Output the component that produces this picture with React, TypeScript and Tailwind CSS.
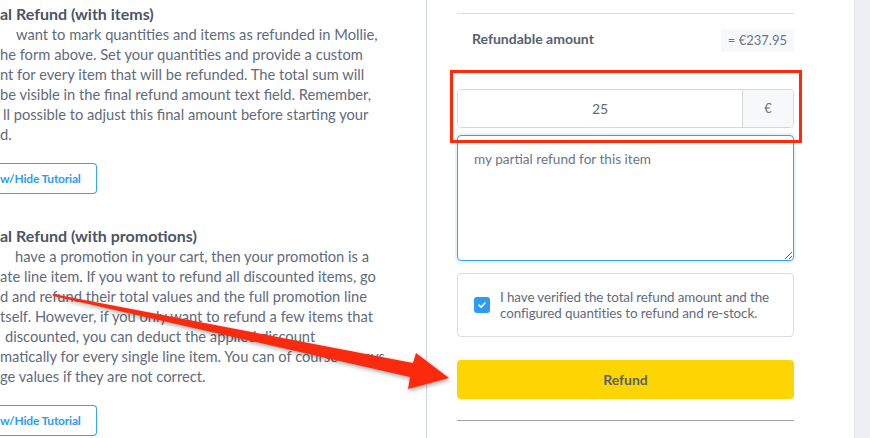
import React from 'react';

const font = { fontFamily: 'Lato, "Noto Sans", sans-serif' };

const itemsLines = [
  { text: 'want to mark quantities and items as refunded in Mollie,', pad: 'pl-[16px]' },
  { text: 'he form above. Set your quantities and provide a custom', pad: 'pl-0' },
  { text: 'nt for every item that will be refunded. The total sum will', pad: 'pl-0' },
  { text: 'be visible in the final refund amount text field. Remember,', pad: 'pl-0' },
  { text: 'll possible to adjust this final amount before starting your', pad: 'pl-[3px]' },
  { text: 'd.', pad: 'pl-0' },
];

const promoLines = [
  { text: 'have a promotion in your cart, then your promotion is a', pad: 'pl-[15px]' },
  { text: 'ate line item. If you want to refund all discounted items, go', pad: 'pl-0' },
  { text: 'd and refund their total values and the full promotion line', pad: 'pl-0' },
  { text: 'tself. However, if you only want to refund a few items that', pad: 'pl-0' },
  { text: 'discounted, you can deduct the applied discount', pad: 'pl-[5px]' },
  { text: 'matically for every single line item. You can of course always', pad: 'pl-0' },
  { text: 'ge values if they are not correct.', pad: 'pl-0' },
];

function TutorialSection({ title, lines }: { title: string; lines: { text: string; pad: string }[] }) {
  return (
    <div>
      <h3 className="text-[16px] leading-[20px] font-bold text-[#4b5563] whitespace-nowrap">{title}</h3>
      <div className="text-[14.7px] leading-[20px] text-[#5f6b7b]">
        {lines.map((line, i) => (
          <div key={i} className={`whitespace-nowrap ${line.pad}`}>
            {line.text}
          </div>
        ))}
      </div>
      <button className="mt-[19px] h-[31px] pr-[15px] border border-[#3aa0f0] rounded-r-[4px] border-l-0 text-[12px] tracking-[-0.2px] font-bold text-[#2d9cf0]">
        w/Hide Tutorial
      </button>
    </div>
  );
}

export default function App() {
  return (
    <div className="relative w-[870px] h-[438px] overflow-hidden bg-white flex" style={font}>
      {/* left column with tutorials */}
      <div className="w-[427px] shrink-0 border-r border-[#cfd6df] overflow-hidden pt-[4px]">
        <TutorialSection title="al Refund (with items)" lines={itemsLines} />
        <div className="mt-[32px]">
          <TutorialSection title="al Refund (with promotions)" lines={promoLines} />
        </div>
      </div>

      {/* refund form */}
      <div className="w-[427px] shrink-0 pl-[30px] pr-[60px]">
        <div className="mt-[13px] border-t border-[#dcdcdc]" />
        <div className="mt-[15px] flex items-start justify-between">
          <span className="pl-[15px] text-[14px] leading-[20px] font-bold text-[#556070]">Refundable amount</span>
          <span className="h-[23px] px-[7px] flex items-center bg-[#f7f8fa] rounded-[2px] text-[13px] text-[#6b7585]">
            = €237.95
          </span>
        </div>

        <div className="mt-[37px] h-[39px] flex border border-[#d6d9de] rounded-[4px] overflow-hidden">
          <input
            readOnly
            value="25"
            className="flex-1 min-w-0 text-center text-[14px] text-[#5f6b7b] outline-none bg-white"
            style={font}
          />
          <div className="w-[51px] flex items-center justify-center border-l border-[#d6d9de] bg-[#f7f8fa] text-[13px] text-[#6b7585]">
            €
          </div>
        </div>

        <textarea
          readOnly
          defaultValue="my partial refund for this item"
          className="mt-[7px] block w-full h-[126px] px-[16px] pt-[13px] border border-[#3d9df2] rounded-[4px] shadow-[0_0_0_2px_rgba(61,157,242,0.12)] text-[13.6px] leading-[20px] text-[#6b7585] outline-none"
          style={font}
        />

        <div className="mt-[12px] h-[64px] flex items-center gap-[10px] px-[16px] border border-[#d8dde3] rounded-[4px]">
          <div className="w-[16px] h-[16px] shrink-0 rounded-[3px] bg-[#2e9bf0] flex items-center justify-center">
            <svg width="10" height="10" viewBox="0 0 10 10">
              <path d="M2 5.2 L4.1 7.2 L8 3" fill="none" stroke="white" strokeWidth="1.6" strokeLinecap="round" strokeLinejoin="round" />
            </svg>
          </div>
          <p className="text-[13.4px] tracking-[-0.1px] leading-[16px] text-[#5f6b7b]">
            I have verified the total refund amount and the configured quantities to refund and re-stock.
          </p>
        </div>

        <button className="mt-[23px] w-full h-[39px] rounded-[4px] bg-[#fcd503] text-[14px] font-bold text-[#5a6270]">
          Refund
        </button>

        <div className="mt-[21px] border-t border-[#a3a3a3]" />
      </div>

      {/* page background strip */}
      <div className="flex-1 border-l border-[#e1e4ea] bg-[#eef0f5]" />

      {/* annotation: highlight box */}
      <div className="absolute left-[450px] top-[70px] w-[352px] h-[73px] border-[3px] border-[#ff2a0a] pointer-events-none" />

      {/* annotation: arrow */}
      <svg
        className="absolute inset-0 pointer-events-none drop-shadow-[1px_2px_2px_rgba(0,0,0,0.35)]"
        width="870"
        height="438"
        viewBox="0 0 870 438"
      >
        <polygon
          points="53,294 413,363 416,353 449,378 408,389 410,377 53,296"
          fill="#fa2a0e"
        />
      </svg>
    </div>
  );
}
